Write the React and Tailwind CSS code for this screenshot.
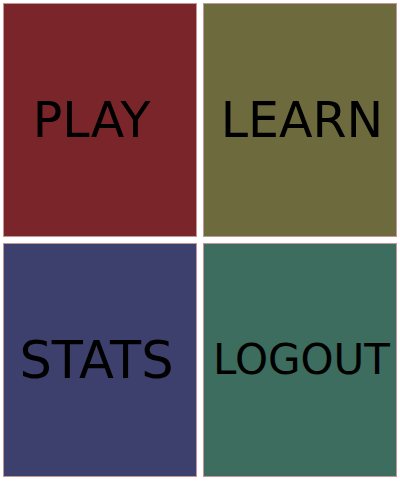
import React from "react";

const tiles = [
  { label: "PLAY", bg: "bg-[#7a2529]", size: "text-[49px] pr-[17px]" },
  { label: "LEARN", bg: "bg-[#6d6a3d]", size: "text-[49px] pl-[4px]" },
  { label: "STATS", bg: "bg-[#3d406d]", size: "text-[51px] pr-[7px]" },
  { label: "LOGOUT", bg: "bg-[#3c6d5e]", size: "text-[42px] pl-[3px]" },
];

function App() {
  return (
    <div className="w-[400px] h-[481px] bg-white p-[3px] grid grid-cols-2 gap-x-[6px] gap-y-[5px] font-['DejaVu_Sans',sans-serif]">
      {tiles.map((t) => (
        <button
          key={t.label}
          className={`${t.bg} h-[234px] border border-[#c79595] flex items-center justify-center text-black ${t.size} leading-none`}
        >
          {t.label}
        </button>
      ))}
    </div>
  );
}

export default App;
